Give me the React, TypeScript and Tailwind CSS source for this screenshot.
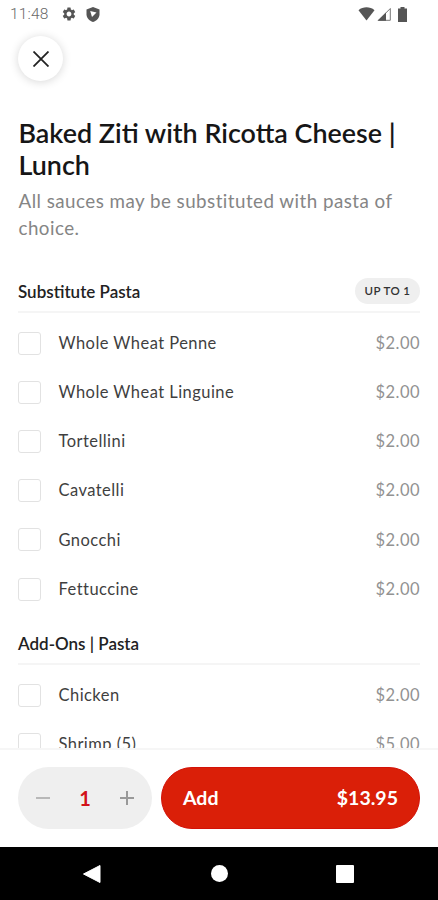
import { MdSettings } from 'react-icons/md'

type Option = { name: string; price: string }

const substitutes: Option[] = [
  { name: 'Whole Wheat Penne', price: '$2.00' },
  { name: 'Whole Wheat Linguine', price: '$2.00' },
  { name: 'Tortellini', price: '$2.00' },
  { name: 'Cavatelli', price: '$2.00' },
  { name: 'Gnocchi', price: '$2.00' },
  { name: 'Fettuccine', price: '$2.00' },
]

const addOns: Option[] = [
  { name: 'Chicken', price: '$2.00' },
  { name: 'Shrimp (5)', price: '$5.00' },
]

function StatusBar() {
  return (
    <div className="flex h-7 shrink-0 items-center justify-between pl-[10px] pr-[31px] text-[#6a6a6a]">
      <div className="flex items-center">
        <span className="w-[51px] pt-px font-['Roboto',sans-serif] text-[15.5px] font-light tracking-[0.2px]">11:48</span>
        <MdSettings className="h-4 w-4" color="#555" />
        <svg className="ml-[9px] h-[15px] w-[14px]" viewBox="0 0 14 15">
          <path d="M7 0l6.500 2.400v4.800c0 3.600-2.700 6.600-6.500 7.800C3.200 13.800.5 10.800.5 7.200V2.400z" fill="#555" />
          <path d="M4.200 4l6.300 1.500-4.500 4.500z" fill="#fff" />
        </svg>
      </div>
      <div className="flex items-center">
        <svg className="h-[14px] w-[17px]" viewBox="0 0 17 14">
          <path d="M.5 3.200C5-.6 12-.6 16.500 3.200L8.500 13.500z" fill="#555" />
        </svg>
        <svg className="ml-[2px] h-[14px] w-[14px]" viewBox="0 0 14 14">
          <path d="M1.500 13.300L13.300 1.500v11.800z" fill="none" stroke="#777" />
          <path d="M.5 13.800L9 5.500v8.300z" fill="#555" />
        </svg>
        <svg className="ml-[7px] h-[15px] w-[9px]" viewBox="0 0 9 15">
          <path d="M2.500 0h4v1.500H9V15H0V1.500h2.500z" fill="#555" />
        </svg>
      </div>
    </div>
  )
}

function OptionRow({ name, price }: Option) {
  return (
    <li className="flex h-[49.1px] items-center">
      <span className="h-[23px] w-[23px] rounded-[3px] border-[1.5px] border-[#e2e2e2]" />
      <span className="ml-[17.5px] flex-1 text-[16.5px] tracking-[0.45px] text-[#3f3f3f]">{name}</span>
      <span className="text-[16.5px] tracking-[0.45px] text-[#929292]">{price}</span>
    </li>
  )
}

function OptionGroup({ title, badge, options }: { title: string; badge?: string; options: Option[] }) {
  return (
    <section>
      <div className="flex h-[42px] items-center justify-between border-b-2 border-[#f5f5f5]">
        <h2 className="pt-px text-[17px] font-semibold text-[#222]">{title}</h2>
        {badge && (
          <span className="flex h-[26px] w-[65px] items-center justify-center rounded-full bg-[#efefef] text-[11.5px] font-semibold tracking-[0.4px] text-[#333]">
            {badge}
          </span>
        )}
      </div>
      <ul className="pt-[6px]">
        {options.map((o) => (
          <OptionRow key={o.name} {...o} />
        ))}
      </ul>
    </section>
  )
}

function Footer() {
  return (
    <div className="flex h-[99px] shrink-0 gap-[9px] border-t-2 border-[#f6f6f6] bg-white px-[18px] pt-[17px]">
      <div className="flex h-[62px] w-[134px] items-center justify-between rounded-full bg-[#efefef] px-[18px]">
        <svg className="h-[14px] w-[14px]" viewBox="0 0 14 14">
          <path d="M0 7h14" stroke="#b8b8b8" strokeWidth="2" />
        </svg>
        <span className="text-[20px] font-bold text-[#d2121a]">1</span>
        <svg className="h-[14px] w-[14px]" viewBox="0 0 14 14">
          <path d="M0 7h14M7 0v14" stroke="#999" strokeWidth="2" />
        </svg>
      </div>
      <button className="flex h-[62px] flex-1 items-center justify-between rounded-full border border-[#d31208] bg-[#da1f08] px-[21px] text-[19.5px] font-bold text-white">
        <span>Add</span>
        <span>$13.95</span>
      </button>
    </div>
  )
}

function NavBar() {
  return (
    <div className="flex h-[53px] shrink-0 items-center bg-black pl-[83px]">
      <svg className="h-[18px] w-[18px]" viewBox="0 0 18 18">
        <path d="M17 .5v17L.5 9z" fill="#fff" stroke="#fff" strokeLinejoin="round" />
      </svg>
      <span className="ml-[110px] h-[17px] w-[17px] rounded-full bg-white" />
      <span className="ml-[108px] h-[18px] w-[18px] rounded-[1px] bg-white" />
    </div>
  )
}

export default function App() {
  return (
    <div className="flex h-[900px] w-[438px] flex-col overflow-hidden bg-white font-['Lato',sans-serif]">
      <StatusBar />
      <main className="min-h-0 flex-1 overflow-hidden px-[18px] pt-2">
        <button className="flex h-[45px] w-[45px] items-center justify-center rounded-full bg-white shadow-[0_1px_10px_rgba(0,0,0,0.16)]">
          <svg className="h-4 w-4" viewBox="0 0 16 16">
            <path d="M.5.5l15 15M15.500.5l-15 15" stroke="#222" strokeWidth="1.800" />
          </svg>
        </button>
        <h1 className="mt-9 pl-[0.5px] text-[26.9px] font-semibold leading-8 text-[#161616]">
          Baked Ziti with Ricotta Cheese |<br />
          Lunch
        </h1>
        <p className="mt-[6px] pl-[0.5px] text-[18.8px] leading-[27px] tracking-[0.46px] text-[#858585]">
          All sauces may be substituted with pasta of<br />
          choice.
        </p>
        <div className="mt-[30px] flex flex-col gap-[9.5px]">
          <OptionGroup title="Substitute Pasta" badge="UP TO 1" options={substitutes} />
          <OptionGroup title="Add-Ons | Pasta" options={addOns} />
        </div>
      </main>
      <Footer />
      <NavBar />
    </div>
  )
}
